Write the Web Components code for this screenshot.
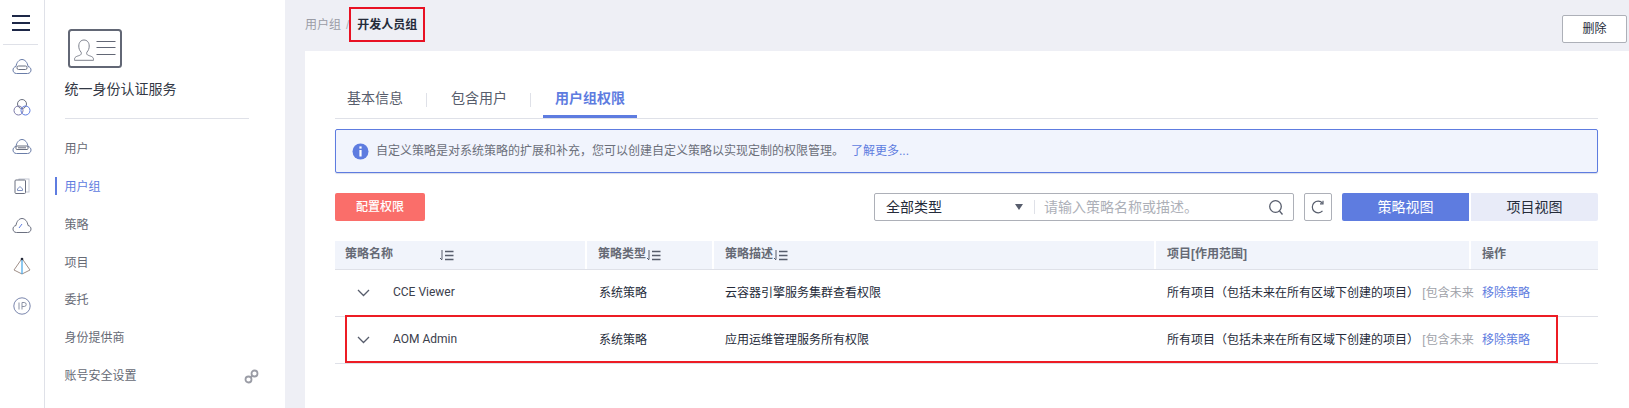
<!DOCTYPE html>
<html lang="zh">
<head>
<meta charset="utf-8">
<title>开发人员组</title>
<style>
html,body{margin:0;padding:0;height:100%;overflow:hidden;background:#fff}
body{font:12px/1.2 "Liberation Sans","Noto Sans CJK SC",sans-serif;color:#252b3a}
</style>
</head>
<body>
<iam-console></iam-console>
<script>
function el(name, css, html){
  customElements.define(name, class extends HTMLElement{
    constructor(){super();const r=this.attachShadow({mode:'open'});r.innerHTML='<style>'+css+'</style>'+html;}
  });
}
const B='#5e7ce0', G='#6b7080';

el('rail-icon',`:host{display:flex;justify-content:center;align-items:center;height:39.8px}
 ::slotted(svg){display:block}`,`<slot></slot>`);

el('icon-rail',`:host{display:block;flex:none;width:44px;height:100%;border-right:1px solid #dfe1e8;box-sizing:content-box}
 .burger{height:45px;margin:0 6px 0 3px;border-bottom:1px solid #dfe1e8;display:flex;flex-direction:column;align-items:center;justify-content:center;gap:5px;box-sizing:border-box;padding-top:2px}
 .burger i{display:block;width:18px;height:2px;background:#1d2747}
 .list{padding-top:2px}`,
`<div class="burger"><i></i><i></i><i></i></div><div class="list"><slot></slot></div>`);

el('nav-item',`:host{display:flex;align-items:center;justify-content:space-between;height:37.8px;padding:0 26px 0 9.5px;color:#666a75;font-size:12px;position:relative}
 :host([active]){color:${B}}
 :host([active])::before{content:"";position:absolute;left:0;top:8.7px;bottom:11.1px;width:2px;background:${B}}
 ::slotted(svg){display:block}`,`<span><slot></slot></span><slot name="end"></slot>`);

el('side-nav',`:host{display:block;flex:none;width:240px;height:100%;padding:29px 0 0 10px;box-sizing:border-box}
 .id{display:block;margin-left:13px}
 .t{margin:10px 0 0 9.5px;font-size:14px;line-height:18px;color:#333845}
 hr{border:0;height:1px;background:#dfe1e8;margin:20px 26px 0 10px;width:184px}
 nav{margin-top:11.6px}`,
`<svg class="id" width="55" height="41" viewBox="0 0 55 41" fill="none">
  <rect x="1" y="1" width="52" height="37" rx="2.5" stroke="#626775" stroke-width="2"/>
  <path d="M6.500 30.500c0-3.500 3.800-3.200 6-4.600 1-.7 1-1.700.6-2.700-1.600-1.800-2.300-3.600-2.300-6.200 0-3.600 2.100-6 5.200-6s5.200 2.400 5.200 6c0 2.600-.7 4.400-2.300 6.200-.4 1-.4 2 .6 2.700 2.200 1.400 6 1.100 6 4.600v.8H6.500z" stroke="#7d818d" stroke-width="1"/>
  <path d="M28.500 12.500h19M28.500 18.500h19M28.500 25.500h19" stroke="#626775" stroke-width="1"/>
 </svg>
 <div class="t">统一身份认证服务</div><hr><nav><slot></slot></nav>`);

el('crumb-bar',`:host{display:flex;justify-content:space-between;height:51px;padding-left:20px;box-sizing:border-box;font-size:12px;position:relative}
 .c{display:flex;align-items:center;height:50px;color:#9a9ca5}
 .s{margin:0 8px 0 5px;color:#adb0b8}
 b{font-weight:700;color:#252b3a}
 .mark{position:absolute;left:64px;top:7px;width:76px;height:35px;border:2px solid #e81123;box-sizing:border-box}
 button{font:inherit;color:#252b3a;background:#fff;border:1px solid #adb0b8;border-radius:2px;width:65px;height:28px;margin:15px 2px 0 0;padding:0}`,
`<div class="c"><span>用户组</span><span class="s">/</span><b>开发人员组</b></div><button>删除</button><div class="mark"></div>`);

el('tab-bar',`:host{display:flex;height:38px;border-bottom:1px solid #dfe1e8;box-sizing:border-box;font-size:14px;color:#575d6c;align-items:stretch}
 .t{padding:0 12px;display:flex;align-items:center;height:35px;position:relative}
 .d{width:1px;height:14px;background:#dfe1e8;margin:12px 12px 0 11px;flex:none}
 .a{color:${B};font-weight:700;height:37px;box-sizing:border-box;border-bottom:3px solid ${B};padding:0 12px}`,
`<div class="t">基本信息</div><div class="d"></div><div class="t">包含用户</div><div class="d"></div><div class="t a">用户组权限</div>`);

el('info-alert',`:host{display:flex;align-items:center;height:44px;margin-top:10px;box-sizing:border-box;background:#f1f4fd;border:1px solid ${B};border-radius:2px;padding-left:16px;font-size:12px;color:#6b6f7a;box-shadow:0 1px 1px #d8dbe8}
 svg{flex:none;margin-right:7px}
 a{color:${B};margin-left:7px;text-decoration:none}`,
`<svg width="17" height="17" viewBox="0 0 17 17"><circle cx="8.500" cy="8.500" r="8" fill="${B}"/><rect x="7.400" y="3.400" width="2.200" height="2.200" fill="#fff"/><rect x="7.400" y="7" width="2.200" height="6.500" fill="#fff"/></svg>
 <span>自定义策略是对系统策略的扩展和补充，您可以创建自定义策略以实现定制的权限管理。</span><a>了解更多...</a>`);

el('policy-toolbar',`:host{display:flex;align-items:stretch;height:28px;margin-top:20px;font-size:14px}
 .p{width:90px;border-radius:2px;background:#fa6e6a;color:#fff;display:flex;align-items:center;justify-content:center;font-size:12px;font-weight:500}
 .sp{flex:1}
 .f{width:420px;box-sizing:border-box;border:1px solid #adb0b8;border-radius:2px;display:flex;align-items:center;padding-left:11px;color:#252b3a}
 .v{width:129px}
 .ar{width:0;height:0;border-left:4px solid transparent;border-right:4px solid transparent;border-top:6px solid #575d6c;margin-right:11px}
 .dv{width:1px;height:14px;background:#dfe1e8;margin-right:9px}
 .ph{flex:1;color:#adb0b8}
 .q{margin-right:9px;display:block}
 .r{width:28px;box-sizing:border-box;border:1px solid #adb0b8;border-radius:2px;margin:0 10px;display:flex;align-items:center;justify-content:center}
 .on,.off{width:127px;display:flex;align-items:center;justify-content:center}
 .on{background:${B};color:#fff;border-radius:2px 0 0 2px;margin-right:2px}
 .off{background:#e8ebf8;color:#252b3a;border-radius:0 2px 2px 0}`,
`<div class="p">配置权限</div><div class="sp"></div>
 <div class="f"><span class="v">全部类型</span><i class="ar"></i><i class="dv"></i><span class="ph">请输入策略名称或描述。</span>
 <svg class="q" width="16" height="17" viewBox="0 0 16 17" fill="none" stroke="#575d6c" stroke-width="1.300"><circle cx="7.500" cy="7.500" r="5.800"/><path d="M11.500 12l3 3.500"/></svg></div>
 <div class="r"><svg width="14" height="16" viewBox="0 0 14 16" fill="none" stroke="#575d6c" stroke-width="1.200"><path d="M11.500 4.200A5.800 5.800 0 1 0 11.500 11.800"/><path d="M12 1.800v3h-3"/></svg></div>
 <div class="on">策略视图</div><div class="off">项目视图</div>`);

el('sort-mark',`:host{display:inline-block;line-height:0;position:relative;top:1px;flex:none}`,
`<svg width="15" height="11" viewBox="0 0 15 11" fill="none" stroke="#575d6c"><path d="M3 0v9.500M1 8l2 2" stroke-width="1"/><path d="M6 1.500h8.500M6 5.500h8.500M6 9.500h8.500" stroke-width="1.400"/></svg>`);

el('table-row',`:host{display:grid;grid-template-columns:252px 127px 442px 315px 127px;height:47px;border-bottom:1px solid #dfe1e8;box-sizing:border-box;align-items:center;font-size:12px;color:#252b3a}
 .n{display:flex;align-items:center;padding-left:22px}
 .n svg{flex:none;margin-right:23px}
 .n span{position:relative;top:-1px;color:#3b404c;font-family:Roboto,"Liberation Sans",sans-serif}
 .c{padding-left:11px;white-space:nowrap}
 .c2{padding-left:12px}
 .g{color:#a0a2a9}
 a{color:${B}}`,
`<div class="n"><svg width="13" height="8" viewBox="0 0 13 8" fill="none" stroke="#575d6c" stroke-width="1.300"><path d="M1 1l5.500 5.500L12 1"/></svg><span><slot name="name"></slot></span></div>
 <div class="c c2">系统策略</div><div class="c"><slot name="desc"></slot></div>
 <div class="c">所有项目（包括未来在所有区域下创建的项目）<span class="g"> [包含未来</span></div>
 <div class="c"><a>移除策略</a></div>`);

el('policy-table',`:host{display:block;margin-top:20px;position:relative}
 .h{display:grid;grid-template-columns:252px 127px 442px 315px 127px;height:29px;box-sizing:border-box;border-bottom:1px solid #dfe1e8;background:#f1f4fb;font-size:12px;font-weight:600;color:#666a75}
 .h>div{display:flex;align-items:center;padding:0 0 2px 11px;border-right:2px solid #fff;box-sizing:border-box}
 .h>div:first-child{padding-left:10px}
 .h>div:last-child{border-right:0}
 .mark{position:absolute;left:10px;top:74px;width:1213px;height:48px;border:2px solid #ed1c24;box-sizing:border-box}`,
`<div class="h"><div><span style="width:94px">策略名称</span><sort-mark></sort-mark></div><div><span>策略类型</span><sort-mark></sort-mark></div><div><span>策略描述</span><sort-mark></sort-mark></div><div>项目[作用范围]</div><div>操作</div></div>
 <slot></slot><div class="mark"></div>`);

el('detail-card',`:host{display:block;flex:1;margin-left:20px;background:#fff;padding:30px 31px 0 30px;min-height:0}`,`<slot></slot>`);
el('main-pane',`:host{display:flex;flex-direction:column;flex:1;min-width:0;height:100%;background:#eeeff5}`,`<slot></slot>`);
el('iam-console',`:host{display:flex;height:408px;width:1629px;overflow:hidden}`,`<slot></slot>`);

const host=document.querySelector('iam-console');
const icon=(w,h,body)=>`<rail-icon><svg width="${w}" height="${h}" viewBox="0 0 ${w} ${h}" fill="none" stroke-width="1">${body}</svg></rail-icon>`;
const cloud=`<path d="M5 15.500H4.500C2 15.500 1 13.500 1 12s1-3.200 3-3.500C4.500 4.500 7 1.500 10 1.500s5.500 3 6 7c2 .3 3 2 3 3.500s-1 3.500-3.500 3.500z" stroke="#6a7da8"/>`;
host.innerHTML=`
<icon-rail>
 ${icon(20,17,cloud+`<rect x="5" y="8" width="10" height="3.500" rx="1.500" stroke="${G}"/>`)}
 ${icon(18,18,`<circle cx="9" cy="6" r="4.500" stroke="${G}"/><circle cx="5.500" cy="12.500" r="4.500" stroke="#7b79a8"/><circle cx="12.500" cy="12.500" r="4.500" stroke="${B}"/>`)}
 ${icon(20,17,cloud+`<rect x="4" y="8" width="12" height="3.500" rx="1" stroke="${G}"/><path d="M6 9.800h8" stroke="${G}"/>`)}
 ${icon(16,16,`<rect x="5" y="1" width="10" height="13" stroke="#c3c8d4"/><rect x="1" y="2" width="10.500" height="13.500" rx="1" fill="#fff" stroke="${G}"/><path d="M3.500 11l2.500-2.500L8.500 11v1.500h-5z" stroke="#7d8fc0"/>`)}
 ${icon(20,16,`<path d="M5 14.500H4.500C2 14.500 1 12.500 1 11s1-3.200 3-3.500C4.500 3.500 7 .5 10 .5s5.500 3 6 7c2 .3 3 2 3 3.500s-1 3.500-3.500 3.500z" stroke="${G}"/><path d="M7 10l3-4" stroke="${B}"/>`)}
 ${icon(18,18,`<path d="M9 1.500 1 13l8 4 8-4z" stroke="#a08f88"/><path d="M9 2v15" stroke="#42a5e8" stroke-width="1.200"/><circle cx="9" cy="2" r="1.300" fill="#252b3a"/>`)}
 ${icon(18,18,`<circle cx="9" cy="9" r="8.200" stroke="#7a86ad"/><path d="M6 5.500v7M9 12.500v-7h2.200a2 2 0 0 1 0 4H9" stroke="#8b92a5"/>`)}
</icon-rail>
<side-nav>
 <nav-item>用户</nav-item><nav-item active>用户组</nav-item><nav-item>策略</nav-item><nav-item>项目</nav-item><nav-item>委托</nav-item><nav-item>身份提供商</nav-item>
 <nav-item>账号安全设置<svg slot="end" width="15" height="15" viewBox="0 0 15 15" fill="none" stroke="#9a9ca5" stroke-width="1.800"><circle cx="4.500" cy="10.500" r="3"/><circle cx="10.500" cy="4.500" r="3"/><path d="M6.500 8.500l2-2"/></svg></nav-item>
</side-nav>
<main-pane>
 <crumb-bar></crumb-bar>
 <detail-card>
  <tab-bar></tab-bar><info-alert></info-alert><policy-toolbar></policy-toolbar>
  <policy-table>
   <table-row><span slot="name">CCE Viewer</span><span slot="desc">云容器引擎服务集群查看权限</span></table-row>
   <table-row><span slot="name">AOM Admin</span><span slot="desc">应用运维管理服务所有权限</span></table-row>
  </policy-table>
 </detail-card>
</main-pane>`;
</script>
</body>
</html>
